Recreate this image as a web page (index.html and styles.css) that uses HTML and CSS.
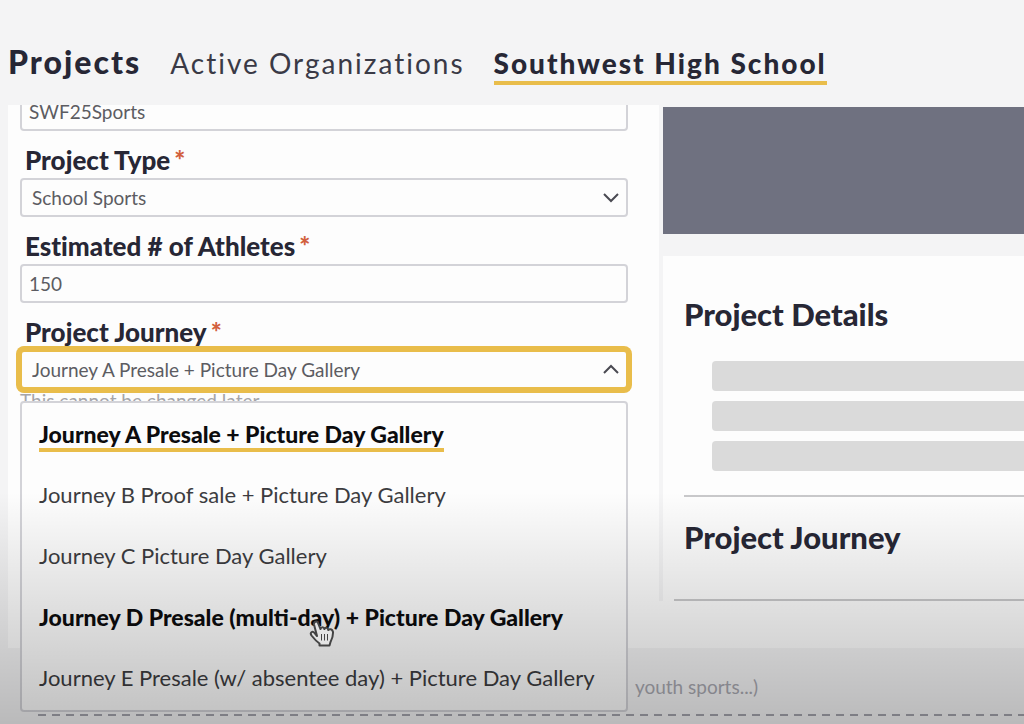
FILE: index.html
```html
<!DOCTYPE html>
<html lang="en">
<head>
  <meta charset="UTF-8" />
  <meta name="viewport" content="width=device-width, initial-scale=1.0"/>
  <title>Projects</title>
  <link rel="stylesheet" href="styles.css">
</head>
<body>
  <header class="topbar">
    <nav class="tabs">
      <a class="tab title" href="#">Projects</a>
      <a class="tab" href="#">Active Organizations</a>
      <a class="tab active" href="#">Southwest High School</a>
    </nav>
  </header>

  <main class="columns">
    <form class="panel form">
      <input class="control" type="text" value="SWF25Sports" aria-label="Project code">

      <label class="label" for="type">Project Type<span class="required">*</span></label>
      <div class="select-wrap">
        <select class="control select" id="type">
          <option>School Sports</option>
        </select>
        <svg class="chevron" viewBox="0 0 18 12"><path d="M2 2l7 7 7-7"/></svg>
      </div>

      <label class="label" for="athletes">Estimated # of Athletes<span class="required">*</span></label>
      <input class="control" type="text" id="athletes" value="150">

      <label class="label" for="journey">Project Journey<span class="required">*</span></label>
      <div class="select-wrap">
        <select class="control select open" id="journey">
          <option>Journey A Presale + Picture Day Gallery</option>
        </select>
        <svg class="chevron" viewBox="0 0 18 12"><path d="M2 9l7-7 7 7"/></svg>

        <div class="menu">
          <button type="button" class="item selected"><span>Journey A Presale + Picture Day Gallery</span></button>
          <button type="button" class="item"><span>Journey B Proof sale + Picture Day Gallery</span></button>
          <button type="button" class="item"><span>Journey C Picture Day Gallery</span></button>
          <button type="button" class="item hovered"><span>Journey D Presale (multi-day) + Picture Day Gallery</span></button>
          <button type="button" class="item"><span>Journey E Presale (w/ absentee day) + Picture Day Gallery</span></button>
        </div>
      </div>
      <p class="hint">This cannot be changed later.</p>
    </form>

    <aside class="side">
      <div class="banner"></div>
      <div class="panel details">
        <section class="section">
          <h2>Project Details</h2>
          <div class="bars">
            <div class="bar"></div>
            <div class="bar"></div>
            <div class="bar"></div>
          </div>
        </section>
        <section class="section journey">
          <h2>Project Journey</h2>
        </section>
      </div>
    </aside>
  </main>

  <div class="panel spacer"></div>

  <footer class="below">
    <p class="note">youth sports...)</p>
    <div class="dashes"></div>
  </footer>

  <div class="fade"></div>
  <svg class="cursor" viewBox="0 0 26 32">
    <path class="hand" d="M8 19L5 7.500C4.600 4.500 8 3.500 9 6L11.500 12C12 9.500 15 9.500 15.400 12C16.200 10.200 19 10.500 19.200 13C20.500 11.500 23.500 12 24 15C24.200 20 23 22 21.500 25L20.500 28.500H10.500V26.500C7 24 4.500 21 2.500 18.500C.5 15.500 3.500 13.500 5.500 16Z"/>
    <path class="finger" d="M12.500 17v6.500M15.500 17v6.500M18.500 17v6.500"/>
  </svg>
</body>
</html>
```
FILE: styles.css
```css
* {
  box-sizing: border-box;
}

body {
  margin: 0;
  height: 100vh;
  overflow: hidden;
  position: relative;
  background: #f4f4f5;
  color: #272735;
  font-family: Lato, 'Open Sans', sans-serif;
  font-variant-ligatures: none;
}

/* Top navigation */
.topbar {
  position: relative;
  z-index: 2;
  height: 105px;
  padding: 44px 8px 0;
  background: #f4f4f5;
}

.tabs {
  display: flex;
  align-items: baseline;
  gap: 29px;
}

.tab {
  color: #3a3a46;
  font-size: 28px;
  line-height: 36px;
  letter-spacing: 2px;
  text-decoration: none;
  white-space: nowrap;
  border-bottom: 4px solid transparent;
}

.tab.title {
  color: #272735;
  font-size: 32px;
  font-weight: 900;
}

.tab.active {
  color: #272735;
  font-weight: 900;
  border-bottom-color: #e9bd4b;
}

/* Two columns */
.columns {
  display: grid;
  grid-template-columns: minmax(0, 651fr) minmax(0, 361fr);
  gap: 4px;
  height: 496px;
  padding-left: 8px;
}

.panel {
  background: #fdfdfd;
}

.form {
  padding: 0 31px 0 12px;
}

.form > .control:first-child {
  margin-top: -13px;
}

.label {
  display: block;
  padding: 14px 5px 3px;
  font-size: 26px;
  font-weight: 900;
  line-height: 30px;
}

.required {
  margin-left: 4px;
  color: #d2603d;
}

.control {
  display: block;
  width: 100%;
  height: 39px;
  padding: 0 7px;
  border: 2px solid #d3d3d8;
  border-radius: 4px;
  background: #fdfdfd;
  color: #5c5c62;
  font-family: inherit;
  font-size: 19px;
}

.select-wrap {
  position: relative;
}

.select {
  appearance: none;
  padding: 0 10px;
}

.select.open {
  border-color: #e9bd4b;
  box-shadow: 0 0 0 4px #e9bd4b;
}

.chevron {
  position: absolute;
  top: 14px;
  right: 8px;
  width: 18px;
  height: 12px;
  fill: none;
  stroke: #4a4a52;
  stroke-width: 2;
}

.hint {
  margin: 0;
  color: #a5a5aa;
  font-size: 19px;
  line-height: 24px;
}

/* Open drop-down */
.menu {
  position: absolute;
  z-index: 3;
  top: 51px;
  left: 0;
  right: 0;
  padding-bottom: 2px;
  border: 2px solid #d3d3d8;
  border-radius: 4px;
  background: #fdfdfd;
}

.item {
  display: flex;
  align-items: center;
  width: 100%;
  height: 61px;
  padding: 0 17px;
  border: none;
  background: none;
  color: #3c3c40;
  font-family: inherit;
  font-size: 22px;
  line-height: 28px;
  white-space: nowrap;
  cursor: pointer;
}

.item span {
  border-top: 4px solid transparent;
  border-bottom: 4px solid transparent;
}

.item.selected,
.item.hovered {
  color: #0c0c0e;
  font-size: 23px;
  font-weight: 900;
}

.item.selected span {
  border-bottom-color: #e9bd4b;
}

/* Right side */
.side {
  display: flex;
  flex-direction: column;
  gap: 22px;
  padding-top: 2px;
}

.banner {
  height: 127px;
  background: #6f7180;
}

.details {
  display: flex;
  flex: 1;
  flex-direction: column;
  padding-left: 11px;
}

.section {
  margin-left: 10px;
  padding: 39px 0 24px;
  border-bottom: 2px solid #c9c9cb;
}

.section.journey {
  flex: 1;
  margin-left: 0;
  padding: 21px 0 0 10px;
}

.section h2 {
  margin: 0;
  font-size: 31px;
  font-weight: 900;
  line-height: 38px;
}

.bars {
  display: flex;
  flex-direction: column;
  gap: 10px;
  padding: 28px 0 0 28px;
}

.bar {
  height: 30px;
  border-radius: 4px 0 0 4px;
  background: #dadada;
}

/* Page under the form */
.spacer {
  height: 47px;
  margin-left: 8px;
}

.below {
  padding-top: 26px;
}

.note {
  margin: 0;
  padding-left: 62%;
  color: #a8a8b0;
  font-size: 19px;
  line-height: 26px;
}

.dashes {
  height: 2px;
  margin: 14px 0 0 38px;
  background: repeating-linear-gradient(90deg, #a3a3ac 0 8px, transparent 8px 14px);
}

.fade {
  position: absolute;
  z-index: 5;
  left: 0;
  right: 0;
  bottom: 0;
  height: 32%;
  background: linear-gradient(rgba(0, 0, 0, 0), rgba(0, 0, 0, 0.24));
  pointer-events: none;
}

.cursor {
  position: absolute;
  z-index: 6;
  top: 617px;
  left: 309px;
  width: 26px;
  height: 32px;
  pointer-events: none;
}

.hand {
  fill: #e4e4e4;
  stroke: #444;
  stroke-width: 2;
  stroke-linejoin: round;
}

.finger {
  fill: none;
  stroke: #444;
  stroke-width: 1;
}
```
